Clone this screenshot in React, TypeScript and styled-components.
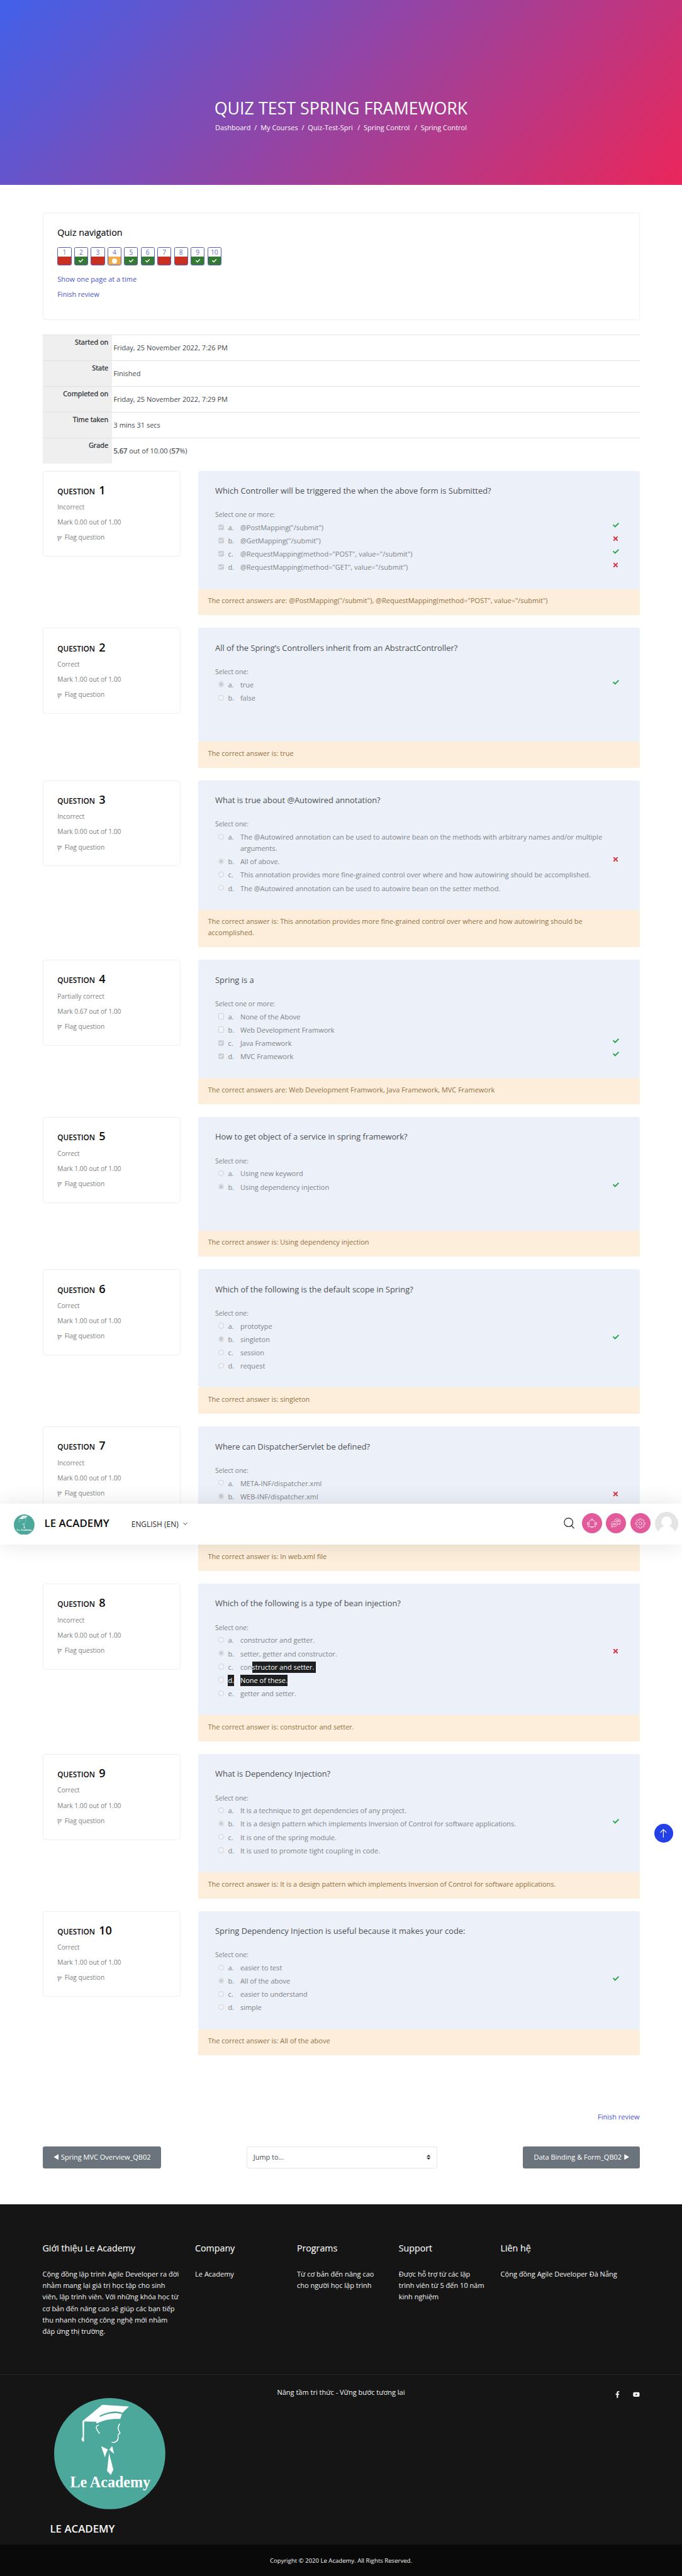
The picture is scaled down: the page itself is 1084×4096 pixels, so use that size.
import React from 'react';
import styled, { createGlobalStyle, css } from 'styled-components';
import { FaCheck, FaTimes, FaFacebookF, FaYoutube } from 'react-icons/fa';

const GlobalStyle = createGlobalStyle`
  html { font-size: 6.384px; }
  body {
    margin: 0;
    background: #fff;
    color: #4b4f54;
    font-family: "Open Sans", "Noto Sans", sans-serif;
    font-size: 1.725rem;
    line-height: 2.82rem;
  }
  *, *::before, *::after { box-sizing: border-box; }
  h1, h2, h3, p { margin: 0; font-weight: 400; }
  a { color: inherit; text-decoration: none; }
  svg { display: block; flex: none; }
`;

const Page = styled.div`
  position: relative;
  width: 100%;
  height: 4096px;
  overflow: hidden;
`;

/* ---------- hero ---------- */

const Hero = styled.header`
  height: 46.05rem;
  padding-top: 23.9rem;
  background: linear-gradient(135deg, #4161ea, #ea265a);
  color: #fff;
  text-align: center;
`;

const HeroTitle = styled.h1`
  height: 6rem;
  font-size: 4.2rem;
  line-height: 6rem;
`;

const Breadcrumbs = styled.nav`
  display: flex;
  justify-content: center;
  gap: 0.92rem;
  margin-top: 0.55rem;
  font-size: 1.715rem;
`;

const Crumb = styled.a<{ $cut?: boolean }>`
  ${(p) =>
    p.$cut &&
    css`
      padding-right: 0.25rem;
    `}
`;

/* ---------- content ---------- */

const Content = styled.main`
  width: 148.65rem;
  margin-left: 10.58rem;
  padding-top: 6.9rem;
`;

const NavCard = styled.section`
  height: 26.85rem;
  padding: 3.3rem 3.55rem;
  border: 1px solid #eeeff1;
  border-radius: 0.7rem;
`;

const NavHeading = styled.h2`
  height: 3rem;
  color: #0a0a0a;
  font-size: 2.245rem;
  line-height: 3rem;
  -webkit-text-stroke: 0.15px currentColor;
`;

const NavButtons = styled.div`
  display: flex;
  gap: 0.65rem;
  margin-top: 2.2rem;
`;

type Outcome = 'wrong' | 'right' | 'partial';

const outcomeColor: Record<Outcome, string> = {
  wrong: '#c93022',
  right: '#357a32',
  partial: '#efac4d',
};

const NavButton = styled.a`
  display: flex;
  flex-direction: column;
  width: 3.5rem;
  height: 4.55rem;
  overflow: hidden;
  border: 1px solid #5660bb;
  border-radius: 0.4rem;
  color: #656dd0;
  font-size: 1.6rem;
  line-height: 2.4rem;
  text-align: center;
`;

const NavOutcome = styled.span<{ $outcome: Outcome }>`
  display: flex;
  flex: 1;
  align-items: center;
  justify-content: center;
  margin-top: -0.2rem;
  background: ${(p) => outcomeColor[p.$outcome]};
  color: #fff;
  font-size: 1.15rem;
`;

const Dot = styled.i`
  width: 1.2rem;
  height: 1.2rem;
  border-radius: 50%;
  background: #fff;
`;

const NavLink = styled.a`
  display: block;
  width: max-content;
  height: 2.8rem;
  color: #4a54cc;
  & + & {
    margin-top: 0.86rem;
  }
`;

const NavLinks = styled.div`
  margin-top: 2.05rem;
`;

/* ---------- summary ---------- */

const Summary = styled.dl`
  margin: 3.5rem 0 1.85rem;
`;

const SummaryRow = styled.div`
  display: flex;
  height: 6.425rem;
  border-top: 1px solid #dfe3e6;
`;

const SummaryLabel = styled.dt`
  width: 17.35rem;
  padding: 0.32rem 0.95rem 0 0;
  background: #efefef;
  color: #2b3035;
  font-size: 1.715rem;
  text-align: right;
  -webkit-text-stroke: 0.3px currentColor;
`;

const SummaryValue = styled.dd`
  margin: 0;
  padding: 1.75rem 0 0 0.35rem;
  color: #44484c;
`;

const Strong = styled.span`
  -webkit-text-stroke: 0.35px currentColor;
`;

/* ---------- questions ---------- */

const QuestionRow = styled.article`
  display: grid;
  grid-template-columns: 34.45rem 109.85rem;
  justify-content: space-between;
  align-items: start;
  margin-bottom: 3.15rem;
`;

const InfoCard = styled.aside`
  height: 21.4rem;
  padding: 3rem 3.55rem 0;
  border: 1px solid #edeff3;
  border-radius: 0.7rem;
  color: #7d7f82;
  font-size: 1.605rem;
`;

const InfoTitle = styled.h3`
  display: flex;
  align-items: baseline;
  gap: 0.95rem;
  height: 3.4rem;
  margin-bottom: 1.05rem;
  color: #0b0b0b;
  font-size: 1.85rem;
  font-weight: 600;
  line-height: 3.4rem;
`;

const InfoNumber = styled.span`
  font-size: 2.84rem;
`;

const InfoLine = styled.p`
  display: flex;
  align-items: center;
  height: 2.8rem;
  margin-bottom: 0.98rem;
`;

const FlagIcon = styled.svg`
  width: 1.2rem;
  height: 1.5rem;
  margin: 0.7rem 0.6rem 0 0;
  fill: none;
  stroke: currentColor;
`;

const Panel = styled.div`
  min-height: 28.28rem;
  padding: 3.5rem 5.1rem 3.47rem 4.2rem;
  border-radius: 0.6rem;
  background: #ecf0f8;
  color: #808388;
`;

const Prompt = styled.h3`
  height: 3rem;
  color: #4d5055;
  font-size: 2.015rem;
  line-height: 3rem;
`;

const SelectHint = styled.p`
  height: 2.8rem;
  margin: 3rem 0 0.45rem;
  font-size: 1.64rem;
`;

const Option = styled.div`
  display: flex;
  padding-left: 0.78rem;
  margin-bottom: 0.49rem;
`;

const Control = styled.span<{ $round?: boolean; $on?: boolean }>`
  display: flex;
  align-items: center;
  justify-content: center;
  width: 1.45rem;
  height: 1.45rem;
  margin: 0.57rem 0.97rem 0 0;
  border: 1px solid #cfd1d6;
  border-radius: ${(p) => (p.$round ? '50%' : '0.3rem')};
  background: ${(p) => (p.$on && !p.$round ? '#cccdd1' : '#f1f3f8')};
  color: #f3f4f8;
  font-size: 1rem;
`;

const RadioDot = styled.i`
  width: 0.85rem;
  height: 0.85rem;
  border-radius: 50%;
  background: #c6c8cc;
`;

const Letter = styled.span`
  width: 3.05rem;
`;

const OptionText = styled.span`
  flex: 1;
  min-height: 2.82rem;
`;

const Selected = styled.mark`
  display: inline-block;
  height: 2.82rem;
  background: #1e1f21;
  color: #fff;
  vertical-align: top;
  white-space: pre;
`;

const Result = styled.span<{ $ok: boolean }>`
  display: flex;
  justify-content: center;
  width: 1.6rem;
  margin-top: ${(p) => (p.$ok ? 0 : -0.05)}rem;
  color: ${(p) => (p.$ok ? '#2aa648' : '#dc3444')};
  font-size: ${(p) => (p.$ok ? 1.55 : 1.7)}rem;
`;

const Feedback = styled.div`
  min-height: 6.53rem;
  padding: 1.52rem 2.3rem 2.15rem 2.38rem;
  background: #fceedb;
  color: #927145;
`;

/* ---------- activity navigation ---------- */

const FinishRow = styled.div`
  display: flex;
  justify-content: flex-end;
  margin-top: 13.95rem;
`;

const ActivityNav = styled.div`
  display: flex;
  justify-content: space-between;
  align-items: center;
  margin-top: 5.85rem;
`;

const ActivityButton = styled.a`
  display: flex;
  align-items: center;
  gap: 0.6rem;
  height: 5.5rem;
  padding: 0 2.55rem 0 2.7rem;
  border-radius: 0.5rem;
  background: #6b747c;
  color: #fff;
`;

const Arrow = styled.svg`
  width: 1.3rem;
  height: 1.5rem;
  fill: currentColor;
`;

const JumpSelect = styled.div`
  display: flex;
  align-items: center;
  justify-content: space-between;
  width: 47.4rem;
  height: 5.5rem;
  padding: 0 1.5rem 0 1.5rem;
  border: 1px solid #e3e6ea;
  border-radius: 0.5rem;
  color: #495057;
  font-size: 1.71rem;
`;

const Sorter = styled.svg`
  width: 1rem;
  height: 1.25rem;
  fill: #343a40;
`;

/* ---------- footer ---------- */

const Footer = styled.footer`
  margin-top: 9rem;
  background: #151515;
  color: #f5f5f5;
`;

const FooterColumns = styled.div`
  display: grid;
  grid-template-columns: 38rem repeat(3, 25.35rem) 38rem;
  height: 42.35rem;
  padding: 9.3rem 0 0 10.58rem;
  border-bottom: 1px solid #242424;
`;

const FooterColumn = styled.section`
  padding-right: 3.45rem;
  line-height: 2.85rem;
`;

const FooterHeading = styled.h3`
  height: 3rem;
  margin-bottom: 3.65rem;
  font-size: 2.23rem;
  line-height: 3rem;
  white-space: nowrap;
  -webkit-text-stroke: 0.15px currentColor;
`;

const FooterBrandRow = styled.div`
  display: grid;
  grid-template-columns: 1fr auto 1fr;
  align-items: start;
  height: 42.3rem;
  padding: 3.05rem 10.5rem 0 12.45rem;
`;

const FooterBrand = styled.div`
  padding-top: 2.85rem;
  font-size: 2.64rem;
  font-weight: 600;
  line-height: 3.4rem;
`;

const FooterLogo = styled.svg`
  width: 27.7rem;
  height: 27.7rem;
  margin: 0 0 3.1rem 1.1rem;
`;

const Slogan = styled.p`
  margin-left: -1.95rem;
`;

const Socials = styled.div`
  display: flex;
  justify-content: flex-end;
  gap: 3.1rem;
  padding-top: 1.1rem;
  font-size: 1.7rem;
`;

const Copyright = styled.div`
  display: flex;
  align-items: center;
  justify-content: center;
  height: 9rem;
  padding-bottom: 0.8rem;
  background: #090909;
  font-size: 1.5rem;
`;

/* ---------- floating bar ---------- */

const FloatingBar = styled.div`
  position: absolute;
  top: 374.6rem;
  left: 0;
  z-index: 10;
  display: flex;
  align-items: center;
  width: 100%;
  height: 10.1rem;
  padding: 0 1rem 0.4rem 3.45rem;
  background: #fff;
  color: #0b0b0b;
  box-shadow: 0 0 5rem rgba(20, 22, 30, 0.11);
`;

const BarLogo = styled.svg`
  width: 5.15rem;
  height: 5.15rem;
  margin: 0.5rem 2.45rem 0 0;
`;

const BarBrand = styled.span`
  margin-right: 5.5rem;
  font-size: 2.64rem;
  font-weight: 600;
`;

const Language = styled.span`
  display: flex;
  align-items: center;
  gap: 1.1rem;
  margin-top: 0.3rem;
  color: #2d2d2d;
  font-size: 1.87rem;
`;

const Chevron = styled.svg`
  width: 1.1rem;
  height: 0.9rem;
  fill: none;
  stroke: currentColor;
`;

const BarTools = styled.div`
  display: flex;
  align-items: center;
  gap: 1rem;
  margin-left: auto;
`;

const SearchIcon = styled.svg`
  width: 2.7rem;
  height: 2.8rem;
  margin-right: 0.8rem;
  fill: none;
  stroke: #222;
`;

const ToolIcon = styled.svg`
  width: 5rem;
  height: 5rem;
  border-radius: 50%;
  background: #e35a9b;
  fill: none;
  stroke: #fff;
  stroke-width: 3.6;
  stroke-linecap: round;
  stroke-linejoin: round;
`;

const Avatar = styled.svg`
  width: 5.8rem;
  height: 5.8rem;
  margin-left: 0.1rem;
  border-radius: 50%;
`;

const BackToTop = styled.a`
  position: absolute;
  top: 454.2rem;
  left: 162.85rem;
  display: flex;
  align-items: center;
  justify-content: center;
  width: 4.7rem;
  height: 4.7rem;
  border-radius: 50%;
  background: #2441e7;
`;

const UpArrow = styled.svg`
  width: 1.7rem;
  height: 2.2rem;
  fill: none;
  stroke: #fff;
`;

/* ---------- drawings ---------- */

const LogoArt = () => (
  <>
    <circle cx="414" cy="414" r="414" fill="#4ba89b" />
    <g transform="translate(-16 -28)" fill="#fff">
      <path d="M374 78 L573 91 L524 138 C485 118 410 130 354 160 L358 168 C410 140 480 132 521 148 L508 184 C450 180 380 190 333 219 L329 205 L240 203 L238 355 C226 350 219 342 220 332 L229 315 L227 200 Z" />
      <path d="M366 386 L418 412 Q402 432 395 471 Z" />
      <path d="M448 385 L427 413 L463 445 Z" />
      <path d="M425 437 L457 562 L438 601 L410 571 Z" />
      <g fill="none" stroke="#fff" strokeWidth="7" strokeLinecap="round">
        <path d="M347 230 C322 232 325 258 354 291" />
        <path d="M504 221 C485 248 492 262 507 290 L496 297 C488 305 492 312 493 325 C490 352 466 363 447 357" />
      </g>
      <text
        x="135"
        y="694"
        textLength="598"
        lengthAdjust="spacingAndGlyphs"
        fontFamily="'Liberation Serif', serif"
        fontWeight="700"
        fontSize="116"
      >
        Le Academy
      </text>
    </g>
  </>
);

const gearPoints = Array.from({ length: 8 }, (_, i) => {
  const base = (i * Math.PI) / 4;
  return [
    [-0.27, 26],
    [-0.17, 36],
    [0.17, 36],
    [0.27, 26],
  ]
    .map(([a, r]) => `${74 + r * Math.sin(base + a)},${77 - r * Math.cos(base + a)}`)
    .join(' ');
}).join(' ');

/* ---------- data ---------- */

type Answer = { text: React.ReactNode; on?: boolean; ok?: boolean; letterSelected?: boolean };

type Question = {
  status: string;
  mark: string;
  prompt: string;
  multi?: boolean;
  answers: Answer[];
  feedback: string;
};

const questions: Question[] = [
  {
    status: 'Incorrect',
    mark: '0.00',
    prompt: 'Which Controller will be triggered the when the above form is Submitted?',
    multi: true,
    answers: [
      { text: '@PostMapping("/submit")', on: true, ok: true },
      { text: '@GetMapping("/submit")', on: true, ok: false },
      { text: '@RequestMapping(method="POST", value="/submit")', on: true, ok: true },
      { text: '@RequestMapping(method="GET", value="/submit")', on: true, ok: false },
    ],
    feedback:
      'The correct answers are: @PostMapping("/submit"), @RequestMapping(method="POST", value="/submit")',
  },
  {
    status: 'Correct',
    mark: '1.00',
    prompt: 'All of the Spring’s Controllers inherit from an AbstractController?',
    answers: [{ text: 'true', on: true, ok: true }, { text: 'false' }],
    feedback: 'The correct answer is: true',
  },
  {
    status: 'Incorrect',
    mark: '0.00',
    prompt: 'What is true about @Autowired annotation?',
    answers: [
      {
        text: 'The @Autowired annotation can be used to autowire bean on the methods with arbitrary names and/or multiple arguments.',
      },
      { text: 'All of above.', on: true, ok: false },
      {
        text: 'This annotation provides more fine-grained control over where and how autowiring should be accomplished.',
      },
      { text: 'The @Autowired annotation can be used to autowire bean on the setter method.' },
    ],
    feedback:
      'The correct answer is: This annotation provides more fine-grained control over where and how autowiring should be accomplished.',
  },
  {
    status: 'Partially correct',
    mark: '0.67',
    prompt: 'Spring is a',
    multi: true,
    answers: [
      { text: 'None of the Above' },
      { text: 'Web Development Framwork' },
      { text: 'Java Framework', on: true, ok: true },
      { text: 'MVC Framework', on: true, ok: true },
    ],
    feedback: 'The correct answers are: Web Development Framwork, Java Framework, MVC Framework',
  },
  {
    status: 'Correct',
    mark: '1.00',
    prompt: 'How to get object of a service in spring framework?',
    answers: [{ text: 'Using new keyword' }, { text: 'Using dependency injection', on: true, ok: true }],
    feedback: 'The correct answer is: Using dependency injection',
  },
  {
    status: 'Correct',
    mark: '1.00',
    prompt: 'Which of the following is the default scope in Spring?',
    answers: [
      { text: 'prototype' },
      { text: 'singleton', on: true, ok: true },
      { text: 'session' },
      { text: 'request' },
    ],
    feedback: 'The correct answer is: singleton',
  },
  {
    status: 'Incorrect',
    mark: '0.00',
    prompt: 'Where can DispatcherServlet be defined?',
    answers: [
      { text: 'META-INF/dispatcher.xml' },
      { text: 'WEB-INF/dispatcher.xml', on: true, ok: false },
      { text: '' },
      { text: '' },
    ],
    feedback: 'The correct answer is: In web.xml file',
  },
  {
    status: 'Incorrect',
    mark: '0.00',
    prompt: 'Which of the following is a type of bean injection?',
    answers: [
      { text: 'constructor and getter.' },
      { text: 'setter, getter and constructor.', on: true, ok: false },
      {
        text: (
          <>
            con<Selected>{'structor and setter. '}</Selected>
          </>
        ),
      },
      { text: <Selected>None of these.</Selected>, letterSelected: true },
      { text: 'getter and setter.' },
    ],
    feedback: 'The correct answer is: constructor and setter.',
  },
  {
    status: 'Correct',
    mark: '1.00',
    prompt: 'What is Dependency Injection?',
    answers: [
      { text: 'It is a technique to get dependencies of any project.' },
      {
        text: 'It is a design pattern which implements Inversion of Control for software applications.',
        on: true,
        ok: true,
      },
      { text: 'It is one of the spring module.' },
      { text: 'It is used to promote tight coupling in code.' },
    ],
    feedback:
      'The correct answer is: It is a design pattern which implements Inversion of Control for software applications.',
  },
  {
    status: 'Correct',
    mark: '1.00',
    prompt: 'Spring Dependency Injection is useful because it makes your code:',
    answers: [
      { text: 'easier to test' },
      { text: 'All of the above', on: true, ok: true },
      { text: 'easier to understand' },
      { text: 'simple' },
    ],
    feedback: 'The correct answer is: All of the above',
  },
];

const outcomeOf = (status: string): Outcome =>
  status === 'Correct' ? 'right' : status === 'Incorrect' ? 'wrong' : 'partial';

const summary: [string, React.ReactNode][] = [
  ['Started on', 'Friday, 25 November 2022, 7:26 PM'],
  ['State', 'Finished'],
  ['Completed on', 'Friday, 25 November 2022, 7:29 PM'],
  ['Time taken', '3 mins 31 secs'],
  [
    'Grade',
    <>
      <Strong>5.67</Strong> out of 10.00 (<Strong>57</Strong>%)
    </>,
  ],
];

const footerColumns: [string, string][] = [
  [
    'Giới thiệu Le Academy',
    'Cộng đồng lập trình Agile Developer ra đời nhằm mang lại giá trị học tập cho sinh viên, lập trình viên. Với những khóa học từ cơ bản đến nâng cao sẽ giúp các bạn tiếp thu nhanh chóng công nghệ mới nhằm đáp ứng thị trường.',
  ],
  ['Company', 'Le Academy'],
  ['Programs', 'Từ cơ bản đến nâng cao cho người học lập trình'],
  ['Support', 'Được hỗ trợ từ các lập trình viên từ 5 đến 10 năm kinh nghiệm'],
  ['Liên hệ', 'Cộng đồng Agile Developer Đà Nẵng'],
];

const crumbs = ['Dashboard', 'My Courses', 'Quiz-Test-Spri', 'Spring Control', 'Spring Control'];

/* ---------- parts ---------- */

const QuestionBlock = ({ q, index }: { q: Question; index: number }) => (
  <QuestionRow>
    <InfoCard>
      <InfoTitle>
        QUESTION <InfoNumber>{index + 1}</InfoNumber>
      </InfoTitle>
      <InfoLine>{q.status}</InfoLine>
      <InfoLine>Mark {q.mark} out of 1.00</InfoLine>
      <InfoLine>
        <FlagIcon viewBox="0 0 12 15" strokeWidth="1.3">
          <path d="M1 1.5 L4 14 M1 1.5 Q6 3 11 2.2 L7 8 L2.6 8.6 M4 4 L7.5 5" />
        </FlagIcon>
        Flag question
      </InfoLine>
    </InfoCard>
    <div>
      <Panel>
        <Prompt>{q.prompt}</Prompt>
        <SelectHint>{q.multi ? 'Select one or more:' : 'Select one:'}</SelectHint>
        {q.answers.map((a, i) => {
          const letter = `${'abcde'[i]}.`;
          return (
            <Option key={i}>
              <Control $round={!q.multi} $on={a.on}>
                {a.on && (q.multi ? <FaCheck /> : <RadioDot />)}
              </Control>
              <Letter>{a.letterSelected ? <Selected>{letter}</Selected> : letter}</Letter>
              <OptionText>{a.text}</OptionText>
              <Result $ok={!!a.ok}>{a.ok === true ? <FaCheck /> : a.ok === false ? <FaTimes /> : null}</Result>
            </Option>
          );
        })}
      </Panel>
      <Feedback>{q.feedback}</Feedback>
    </div>
  </QuestionRow>
);

export default function App() {
  return (
    <Page>
      <GlobalStyle />
      <Hero>
        <HeroTitle>QUIZ TEST SPRING FRAMEWORK</HeroTitle>
        <Breadcrumbs>
          {crumbs.map((c, i) => (
            <React.Fragment key={i}>
              {i > 0 && <span>/</span>}
              <Crumb $cut={i === 2 || i === 3}>{c}</Crumb>
            </React.Fragment>
          ))}
        </Breadcrumbs>
      </Hero>

      <Content>
        <NavCard>
          <NavHeading>Quiz navigation</NavHeading>
          <NavButtons>
            {questions.map((q, i) => {
              const outcome = outcomeOf(q.status);
              return (
                <NavButton key={i}>
                  {i + 1}
                  <NavOutcome $outcome={outcome}>
                    {outcome === 'right' && <FaCheck />}
                    {outcome === 'partial' && <Dot />}
                  </NavOutcome>
                </NavButton>
              );
            })}
          </NavButtons>
          <NavLinks>
            <NavLink>Show one page at a time</NavLink>
            <NavLink>Finish review</NavLink>
          </NavLinks>
        </NavCard>

        <Summary>
          {summary.map(([label, value]) => (
            <SummaryRow key={label}>
              <SummaryLabel>{label}</SummaryLabel>
              <SummaryValue>{value}</SummaryValue>
            </SummaryRow>
          ))}
        </Summary>

        {questions.map((q, i) => (
          <QuestionBlock key={i} q={q} index={i} />
        ))}

        <FinishRow>
          <NavLink>Finish review</NavLink>
        </FinishRow>
        <ActivityNav>
          <ActivityButton>
            <Arrow viewBox="0 0 13 15">
              <path d="M12.5 0.5v14L0.5 7.5z" />
            </Arrow>
            Spring MVC Overview_QB02
          </ActivityButton>
          <JumpSelect>
            Jump to...
            <Sorter viewBox="0 0 4 5">
              <path d="M2 0L0 2h4zm0 5L0 3h4z" />
            </Sorter>
          </JumpSelect>
          <ActivityButton>
            Data Binding &amp; Form_QB02
            <Arrow viewBox="0 0 13 15">
              <path d="M0.5 0.5v14l12-7z" />
            </Arrow>
          </ActivityButton>
        </ActivityNav>
      </Content>

      <Footer>
        <FooterColumns>
          {footerColumns.map(([title, text]) => (
            <FooterColumn key={title}>
              <FooterHeading>{title}</FooterHeading>
              <p>{text}</p>
            </FooterColumn>
          ))}
        </FooterColumns>
        <FooterBrandRow>
          <FooterBrand>
            <FooterLogo viewBox="0 0 828 828">
              <LogoArt />
            </FooterLogo>
            LE ACADEMY
          </FooterBrand>
          <Slogan>Nâng tầm tri thức - Vững bước tương lai</Slogan>
          <Socials>
            <FaFacebookF />
            <FaYoutube />
          </Socials>
        </FooterBrandRow>
        <Copyright>Copyright © 2020 Le Academy. All Rights Reserved.</Copyright>
      </Footer>

      <FloatingBar>
        <BarLogo viewBox="0 0 828 828">
          <LogoArt />
        </BarLogo>
        <BarBrand>LE ACADEMY</BarBrand>
        <Language>
          ENGLISH (EN)
          <Chevron viewBox="0 0 11 9" strokeWidth="1.5">
            <path d="M1 2 L5.5 7 L10 2" />
          </Chevron>
        </Language>
        <BarTools>
          <SearchIcon viewBox="0 0 27 28" strokeWidth="1.8">
            <circle cx="12" cy="12" r="10.7" />
            <path d="M19 20 L26 27" />
          </SearchIcon>
          <ToolIcon viewBox="0 0 150 150">
            <path d="M46 99 L53 91 V70 C53 58 61 51 75 51 S97 58 97 70 V91 L104 99 Q75 107 46 99 Z" />
            <path d="M69 51 V48 A6 5 0 0 1 81 48 V51 M64 104 Q75 113 86 104" />
            <path d="M47 70 Q43 78 47 87 M41 70 Q36 78 41 87 M103 70 Q107 78 103 87 M109 70 Q114 78 109 87" />
          </ToolIcon>
          <ToolIcon viewBox="0 0 150 150">
            <path d="M46 94 Q40 88 40 81 C41 70 51 63 63 63 C76 63 86 71 86 82 C86 94 74 103 58 100 L43 105 Q47 100 46 94 Z" />
            <path d="M64 55 C67 47 76 43 87 43 C101 43 110 52 110 62 C110 68 107 73 103 76 L107 85 L95 81 L90 81" />
            <path d="M51 79 H75 M51 86 H75 M76 56 H100 M82 62 H100" />
          </ToolIcon>
          <ToolIcon viewBox="0 0 150 150">
            <polygon points={gearPoints} />
            <circle cx="74" cy="77" r="11.5" />
          </ToolIcon>
          <Avatar viewBox="0 0 58 58">
            <rect width="58" height="58" fill="#e4e4e4" />
            <circle cx="29" cy="24.5" r="13" fill="#fff" />
            <ellipse cx="29" cy="62" rx="24" ry="27" fill="#fff" />
            <rect y="50.5" width="58" height="8" fill="#fff" />
          </Avatar>
        </BarTools>
      </FloatingBar>

      <BackToTop>
        <UpArrow viewBox="0 0 17 22" strokeWidth="1.8">
          <path d="M8.5 21.5 V1.5 M1 9 L8.5 1.5 L16 9" />
        </UpArrow>
      </BackToTop>
    </Page>
  );
}
